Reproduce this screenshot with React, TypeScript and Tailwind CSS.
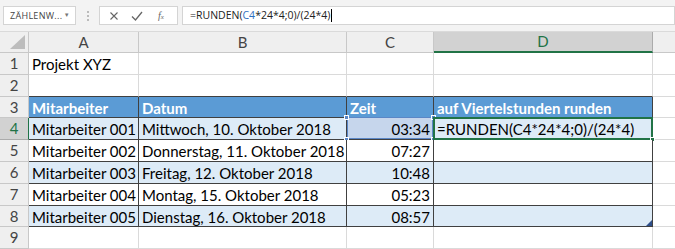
import type { ReactNode } from 'react'

const cols = [110, 208, 87, 219]
const rowHeights = [22, 22, 21, 22, 22, 22, 22, 21, 22]

interface Row {
  a: string
  b: string
  c: string
  band: boolean
}

const data: Row[] = [
  { a: 'Mitarbeiter 001', b: 'Mittwoch, 10. Oktober 2018', c: '03:34', band: true },
  { a: 'Mitarbeiter 002', b: 'Donnerstag, 11. Oktober 2018', c: '07:27', band: false },
  { a: 'Mitarbeiter 003', b: 'Freitag, 12. Oktober 2018', c: '10:48', band: true },
  { a: 'Mitarbeiter 004', b: 'Montag, 15. Oktober 2018', c: '05:23', band: false },
  { a: 'Mitarbeiter 005', b: 'Dienstag, 16. Oktober 2018', c: '08:57', band: true },
]

function RowHead({ n, h, active }: { n: number; h: number; active?: boolean }) {
  return (
    <div
      className={`w-[29px] shrink-0 flex items-center justify-center border-b border-r text-[15px] ${
        active ? 'bg-[#d2d2d2] text-[#217346] border-r-[#217346] border-b-[#ababab]' : 'bg-[#efefef] text-[#444] border-[#c8c8c8]'
      }`}
      style={{ height: h }}
    >
      {n}
    </div>
  )
}

function Cell({
  w,
  children,
  cls = '',
}: {
  w: number
  children?: ReactNode
  cls?: string
}) {
  return (
    <div
      className={`relative shrink-0 h-full flex items-center px-[3px] pt-[2px] whitespace-nowrap overflow-visible border-b border-r ${cls}`}
      style={{ width: w }}
    >
      {children}
    </div>
  )
}

function Handle({ cls }: { cls: string }) {
  return <span className={`absolute w-[5px] h-[5px] bg-[#5b87c6] border border-white ${cls}`} />
}

export default function App() {
  return (
    <div className="w-[675px] h-[249px] overflow-hidden bg-white text-black" style={{ fontFamily: 'Lato, "Liberation Sans", sans-serif' }}>
      {/* formula bar */}
      <div className="h-[32px] bg-[#f3f3f3] flex items-start pt-[6px] border-b border-[#dadada]" style={{ fontFamily: '"Open Sans", "Liberation Sans", sans-serif' }}>
        <div className="ml-[3px] w-[73px] h-[19px] bg-white border border-[#d4d4d4] flex items-center pl-[6px] text-[9px] tracking-[0.3px] text-[#444]">
          <span>ZÄHLENW...</span>
          <span className="ml-auto mr-[5px] text-[6px] text-[#777]">▼</span>
        </div>
        <div className="w-[23px] h-[19px] flex flex-col items-center justify-center gap-[2px]">
          <span className="w-[2px] h-[2px] bg-[#bbb]" />
          <span className="w-[2px] h-[2px] bg-[#bbb]" />
          <span className="w-[2px] h-[2px] bg-[#bbb]" />
        </div>
        <div className="w-[79px] h-[19px] bg-white border border-[#d4d4d4] flex items-center">
          <svg width="10" height="10" viewBox="0 0 10 10" className="ml-[9px]">
            <path d="M1.5 1.5 L8.5 8.5 M8.5 1.5 L1.5 8.5" stroke="#666" strokeWidth="1.1" />
          </svg>
          <svg width="12" height="10" viewBox="0 0 12 10" className="ml-[12px]">
            <path d="M1 5.5 L4.5 9 L11 1" stroke="#666" strokeWidth="1.3" fill="none" />
          </svg>
          <span className="ml-[15px] text-[10px] italic text-[#666]" style={{ fontFamily: '"Liberation Serif", serif' }}>
            f<span className="text-[7px]">x</span>
          </span>
        </div>
        <div className="ml-[4px] flex-1 h-[19px] bg-white border border-[#d4d4d4] flex items-center pl-[7px] text-[10.5px] text-[#222]">
          <span>=RUNDEN(</span>
          <span className="text-[#2f6fc1]">C4</span>
          <span>*24*4;0)/(24*4)</span>
          <span className="w-px h-[13px] bg-black ml-px" />
        </div>
      </div>

      {/* column headers */}
      <div className="flex h-[21px]">
        <div className="w-[29px] shrink-0 bg-[#efefef] border-r border-b border-[#c8c8c8] relative">
          <svg width="18" height="16" viewBox="0 0 18 16" className="absolute right-[2px] bottom-[2px]">
            <polygon points="17,1 17,15 2,15" fill="#bdbdbd" />
          </svg>
        </div>
        {['A', 'B', 'C', 'D'].map((l, i) => (
          <div
            key={l}
            className={`shrink-0 flex items-center justify-center border-r text-[15px] ${
              l === 'D'
                ? 'bg-[#d2d2d2] text-[#217346] border-b-2 border-b-[#217346] border-r-[#ababab]'
                : 'bg-[#efefef] text-[#444] border-b border-[#c8c8c8]'
            }`}
            style={{ width: cols[i] }}
          >
            {l}
          </div>
        ))}
        <div className="flex-1 bg-[#efefef] border-b border-[#c8c8c8]" />
      </div>

      {/* row 1 */}
      <div className="flex" style={{ height: rowHeights[0] }}>
        <RowHead n={1} h={rowHeights[0]} />
        <Cell w={cols[0]} cls="border-[#dadada] text-[15px]">Projekt XYZ</Cell>
        <Cell w={cols[1]} cls="border-[#dadada]" />
        <Cell w={cols[2]} cls="border-[#dadada]" />
        <Cell w={cols[3]} cls="border-[#dadada]" />
        <div className="flex-1 border-b border-[#dadada]" />
      </div>

      {/* row 2 */}
      <div className="flex" style={{ height: rowHeights[1] }}>
        <RowHead n={2} h={rowHeights[1]} />
        {cols.map((w, i) => (
          <Cell key={i} w={w} cls="border-r-[#dadada] border-b-[#404040]" />
        ))}
        <div className="flex-1 border-b border-[#dadada]" />
      </div>

      {/* row 3 table header */}
      <div className="flex" style={{ height: rowHeights[2] }}>
        <RowHead n={3} h={rowHeights[2]} />
        {['Mitarbeiter', 'Datum', 'Zeit', 'auf Viertelstunden runden'].map((t, i) => (
          <Cell key={t} w={cols[i]} cls="bg-[#5b9bd5] border-[#404040] text-white font-bold text-[15px]">
            {t}
          </Cell>
        ))}
        <div className="flex-1 border-b border-[#dadada]" />
      </div>

      {/* data rows */}
      {data.map((r, idx) => {
        const h = rowHeights[3 + idx]
        const first = idx === 0
        const bg = r.band ? 'bg-[#ddebf7]' : 'bg-white'
        return (
          <div key={r.a} className="flex" style={{ height: h }}>
            <RowHead n={4 + idx} h={h} active={first} />
            <Cell w={cols[0]} cls={`${bg} border-[#404040] text-[15px]`}>{r.a}</Cell>
            <Cell w={cols[1]} cls={`${bg} border-[#404040] text-[15px]`}>{r.b}</Cell>
            <Cell
              w={cols[2]}
              cls={`${first ? 'bg-[#c6d6ec]' : bg} border-[#404040] text-[15px] justify-end`}
            >
              {r.c}
              {first && (
                <>
                  <span className="absolute inset-0 border border-[#5b87c6] -top-px" />
                  <Handle cls="-left-[3px] -top-[3px]" />
                  <Handle cls="-right-[3px] -top-[3px]" />
                  <Handle cls="-left-[3px] -bottom-[3px]" />
                  <Handle cls="-right-[3px] -bottom-[3px]" />
                </>
              )}
            </Cell>
            <Cell w={cols[3]} cls={`${bg} border-[#404040] text-[15px]`}>
              {first && (
                <>
                  =RUNDEN(C4*24*4;0)/(24*4)
                  <span className="absolute -left-px -top-px -right-px -bottom-px border-2 border-[#217346]" />
                  <span className="absolute -right-[3px] -bottom-[3px] w-[5px] h-[5px] bg-[#217346] border border-white" />
                </>
              )}
              {idx === data.length - 1 && (
                <svg width="6" height="6" viewBox="0 0 6 6" className="absolute right-0 bottom-0">
                  <polygon points="6,0 6,6 0,6" fill="#2f4f8a" />
                </svg>
              )}
            </Cell>
            <div className="flex-1 border-b border-[#dadada]" />
          </div>
        )
      })}

      {/* row 9 */}
      <div className="flex" style={{ height: rowHeights[8] }}>
        <RowHead n={9} h={rowHeights[8]} />
        {cols.map((w, i) => (
          <Cell key={i} w={w} cls="border-[#dadada]" />
        ))}
        <div className="flex-1 border-b border-[#dadada]" />
      </div>
    </div>
  )
}
